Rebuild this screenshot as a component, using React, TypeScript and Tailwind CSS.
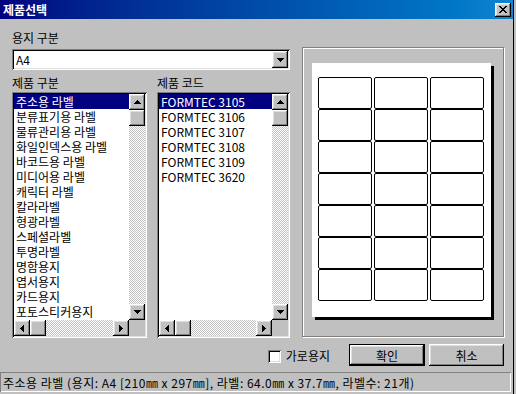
import React from "react";

const raised =
  "bg-[#c0c0c0] shadow-[inset_-1px_-1px_#000000,inset_1px_1px_#ffffff,inset_-2px_-2px_#808080,inset_2px_2px_#dfdfdf]";
const sunken =
  "shadow-[inset_1px_1px_#808080,inset_-1px_-1px_#ffffff,inset_2px_2px_#000000,inset_-2px_-2px_#dfdfdf]";
const track =
  "bg-[image:repeating-conic-gradient(#c0c0c0_0_25%,#ffffff_0_50%)] bg-[length:2px_2px]";

type Dir = "up" | "down" | "left" | "right";

function Arrow({ dir }: { dir: Dir }) {
  const rows = [
    [3, 1],
    [2, 3],
    [1, 5],
    [0, 7],
  ];
  const vertical = dir === "up" || dir === "down";
  return (
    <svg
      width={vertical ? 7 : 4}
      height={vertical ? 4 : 7}
      shapeRendering="crispEdges"
    >
      {rows.map(([start, len], i) => {
        const pos = dir === "up" || dir === "left" ? i : 3 - i;
        return vertical ? (
          <rect key={i} x={start} y={pos} width={len} height={1} fill="#000" />
        ) : (
          <rect key={i} x={pos} y={start} width={1} height={len} fill="#000" />
        );
      })}
    </svg>
  );
}

function ScrollBtn({ dir }: { dir: Dir }) {
  return (
    <div className={`flex h-[16px] w-[16px] shrink-0 items-center justify-center ${raised}`}>
      <Arrow dir={dir} />
    </div>
  );
}

function Thumb() {
  return <div className={`h-[16px] w-[16px] shrink-0 ${raised}`} />;
}

function ListBox({ items, width }: { items: string[]; width: string }) {
  return (
    <div className={`${width} h-[246px] bg-white p-[2px] ${sunken}`}>
      <div className="flex h-[226px]">
        <div className="flex-1 overflow-hidden">
          {items.map((t, i) => (
            <div
              key={t}
              className={`h-[15px] whitespace-nowrap pl-[2px] ${
                i === 0 ? "bg-[#000080] text-white" : ""
              }`}
            >
              {t}
            </div>
          ))}
        </div>
        <div className="flex w-[16px] flex-col">
          <ScrollBtn dir="up" />
          <Thumb />
          <div className={`flex-1 ${track}`} />
          <ScrollBtn dir="down" />
        </div>
      </div>
      <div className="flex h-[16px]">
        <ScrollBtn dir="left" />
        <Thumb />
        <div className={`flex-1 ${track}`} />
        <ScrollBtn dir="right" />
        <div className="h-[16px] w-[16px] bg-[#c0c0c0]" />
      </div>
    </div>
  );
}

function CloseX() {
  const px = [
    [0, 0], [1, 0], [6, 0], [7, 0],
    [1, 1], [2, 1], [5, 1], [6, 1],
    [2, 2], [3, 2], [4, 2], [5, 2],
    [3, 3], [4, 3],
    [2, 4], [3, 4], [4, 4], [5, 4],
    [1, 5], [2, 5], [5, 5], [6, 5],
    [0, 6], [1, 6], [6, 6], [7, 6],
  ];
  return (
    <svg width={8} height={7} shapeRendering="crispEdges">
      {px.map(([x, y], i) => (
        <rect key={i} x={x} y={y} width={1} height={1} fill="#000" />
      ))}
    </svg>
  );
}

export default function App() {
  const cats = [
    "주소용 라벨",
    "분류표기용 라벨",
    "물류관리용 라벨",
    "화일인덱스용 라벨",
    "바코드용 라벨",
    "미디어용 라벨",
    "캐릭터 라벨",
    "칼라라벨",
    "형광라벨",
    "스페셜라벨",
    "투명라벨",
    "명함용지",
    "엽서용지",
    "카드용지",
    "포토스티커용지",
  ];
  const codes = [
    "FORMTEC 3105",
    "FORMTEC 3106",
    "FORMTEC 3107",
    "FORMTEC 3108",
    "FORMTEC 3109",
    "FORMTEC 3620",
  ];
  const labels = Array.from({ length: 21 }, (_, i) => i);

  return (
    <div className="flex h-[394px] w-[516px] overflow-hidden bg-[#c0c0c0] font-['Noto_Sans_CJK_KR','Liberation_Sans',sans-serif] text-[12px] leading-[15px] text-black">
      <div className="flex w-[514px] flex-col border-r border-black">
        {/* title bar */}
        <div className="flex h-[19px] items-center justify-between bg-linear-to-r from-[#000080] to-[#1084d0] pl-[3px] pr-[2px]">
          <span className="text-[12px] font-bold text-white">제품선택</span>
          <div className={`flex h-[14px] w-[16px] items-center justify-center ${raised}`}>
            <CloseX />
          </div>
        </div>

        <div className="flex">
          <div className="ml-[12px] flex w-[278px] flex-col pt-[11px]">
            <div className="h-[15px]">용지 구분</div>
            <div className={`mt-[4px] flex h-[21px] items-center bg-white p-[2px] ${sunken}`}>
              <span className="flex-1 pl-[2px]">A4</span>
              <div className={`flex h-[17px] w-[16px] items-center justify-center ${raised}`}>
                <Arrow dir="down" />
              </div>
            </div>
            <div className="mt-[5px] flex gap-[10px]">
              <div className="flex flex-col gap-[2px]">
                <div className="h-[15px]">제품 구분</div>
                <ListBox items={cats} width="w-[135px]" />
              </div>
              <div className="flex flex-col gap-[2px]">
                <div className="h-[15px]">제품 코드</div>
                <ListBox items={codes} width="w-[133px]" />
              </div>
            </div>
          </div>

          {/* preview */}
          <div className="ml-[12px] mt-[28px] h-[290px] w-[202px] border border-[#808080] pl-[9px] pt-[15px] shadow-[inset_1px_1px_#ffffff,1px_1px_#ffffff]">
            <div className="h-[254px] w-[179px] bg-white pl-[6px] pt-[14px] shadow-[3px_3px_0_#000000]">
              <div className="grid grid-cols-[repeat(3,54px)] grid-rows-[repeat(7,32px)] gap-x-[2px]">
                {labels.map((i) => (
                  <div key={i} className="rounded-[2px] border border-black" />
                ))}
              </div>
            </div>
          </div>
        </div>

        {/* buttons row */}
        <div className="mt-[6px] flex h-[22px] items-center justify-end pr-[9px]">
          <div className="mr-[19px] flex items-center gap-[5px]">
            <div className={`mt-[2px] h-[13px] w-[13px] bg-white ${sunken}`} />
            <span>가로용지</span>
          </div>
          <div className="flex h-[22px] w-[76px] border border-black">
            <div className={`flex flex-1 items-center justify-center ${raised}`}>확인</div>
          </div>
          <div className={`ml-[4px] flex h-[22px] w-[75px] items-center justify-center ${raised}`}>
            취소
          </div>
        </div>

        {/* status bar */}
        <div className="mt-[6px] flex h-[20px] w-[511px] items-center whitespace-nowrap pl-[3px] tracking-[0.5px] shadow-[inset_1px_1px_#808080,inset_-1px_-1px_#ffffff]">
          주소용 라벨 (용지: A4 [210㎜ x 297㎜], 라벨: 64.0㎜ x 37.7㎜, 라벨수: 21개)
        </div>
      </div>
    </div>
  );
}
